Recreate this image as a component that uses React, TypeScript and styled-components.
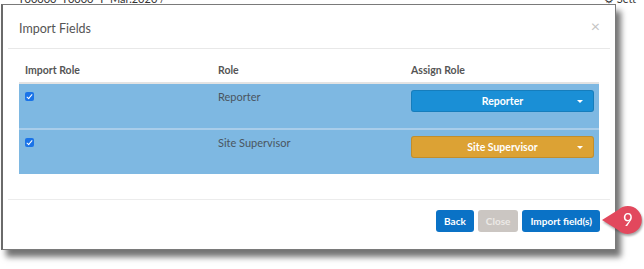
import React from "react";
import styled, { createGlobalStyle } from "styled-components";

const GlobalStyle = createGlobalStyle`
  body {
    margin: 0;
    background: #ffffff;
    font-family: Lato, "Open Sans", Arial, sans-serif;
  }
`;

const Page = styled.div`
  position: relative;
  width: 644px;
  height: 269px;
  overflow: hidden;
`;

const TopStrip = styled.div`
  height: 4px;
  overflow: hidden;
  display: flex;
  align-items: flex-end;
  justify-content: space-between;
  padding: 0 8px 0 18px;
  font-size: 11px;
  line-height: 11px;
  color: #333;
`;

const Modal = styled.div`
  margin-left: 1px;
  width: 615px;
  height: 246px;
  box-sizing: border-box;
  background: #fff;
  border: 1px solid #7a7a7a;
  border-left: 2px solid #6a6a6a;
  box-shadow: 5px 7px 6px rgba(0, 0, 0, 0.55);
  display: flex;
  flex-direction: column;
  padding: 0 5px;
`;

const Header = styled.div`
  height: 43px;
  display: flex;
  align-items: center;
  justify-content: space-between;
  padding: 0 10px 0 11px;
  border-bottom: 1px solid #e8e8e8;
`;

const Title = styled.h4`
  margin: 0;
  margin-top: 4px;
  font-size: 12.5px;
  font-weight: 400;
  color: #555;
`;

const CloseX = styled.span`
  font-size: 16px;
  color: #c4c4c4;
  margin-top: -2px;
`;

const Body = styled.div`
  padding: 13px 10px 0 11px;
  height: 137px;
  border-bottom: 1px solid #ececec;
`;

const Table = styled.div`
  width: 580px;
`;

const Row = styled.div<{ head?: boolean }>`
  display: grid;
  grid-template-columns: 193px 193px 194px;
  height: ${({ head }) => (head ? "20px" : "44px")};
  background: ${({ head }) => (head ? "transparent" : "#7eb8e2")};
  border-bottom: ${({ head }) => (head ? "2px solid #e3e3e3" : "2px solid #a9cdea")};
  &:last-child {
    border-bottom: none;
  }
`;

const HeadCell = styled.div`
  padding-left: 6px;
  font-size: 10.5px;
  font-weight: 700;
  color: #555;
  line-height: 14px;
  padding-top: 1px;
`;

const Cell = styled.div`
  padding: 6px 0 0 6px;
  font-size: 11px;
  color: #4a5560;
  line-height: 14px;
`;

const Check = styled.span`
  display: inline-block;
  width: 9px;
  height: 9px;
  margin-top: 2px;
  border-radius: 2px;
  background: #1a73e8;
  position: relative;
  &::after {
    content: "";
    position: absolute;
    left: 3px;
    top: 1px;
    width: 2px;
    height: 5px;
    border: solid #fff;
    border-width: 0 1.5px 1.5px 0;
    transform: rotate(40deg);
  }
`;

const SelectCell = styled.div`
  padding: 6px 5px 0 6px;
`;

const Select = styled.div<{ color: string }>`
  height: 22px;
  border-radius: 3px;
  background: ${({ color }) => color};
  border: 1px solid rgba(0, 0, 0, 0.12);
  box-sizing: border-box;
  display: flex;
  align-items: center;
  justify-content: center;
  position: relative;
  color: #fff;
  font-size: 10.5px;
  font-weight: 700;
  &::after {
    content: "";
    position: absolute;
    right: 10px;
    top: 9px;
    border-left: 3px solid transparent;
    border-right: 3px solid transparent;
    border-top: 3px solid #fff;
  }
`;

const Footer = styled.div`
  flex: 1;
  display: flex;
  justify-content: flex-end;
  align-items: flex-start;
  gap: 4px;
  padding: 10px 10px 0 0;
`;

const Button = styled.button<{ disabled?: boolean }>`
  height: 22px;
  padding: 0 8px;
  margin: 0;
  border: none;
  border-radius: 3px;
  font-family: Lato, "Open Sans", Arial, sans-serif;
  font-size: 10px;
  font-weight: 700;
  color: ${({ disabled }) => (disabled ? "#ece9e6" : "#fff")};
  background: ${({ disabled }) => (disabled ? "#cbc6c2" : "#0a72c6")};
`;

const Badge = styled.svg`
  position: absolute;
  left: 600px;
  top: 203px;
  filter: drop-shadow(1px 2px 1px rgba(0, 0, 0, 0.35));
`;

export default function App() {
  return (
    <Page>
      <GlobalStyle />
      <TopStrip>
        <span>T00000_T0000_T_Mar.2020 /</span>
        <span>⚙ Sett</span>
      </TopStrip>
      <Modal>
        <Header>
          <Title>Import Fields</Title>
          <CloseX>×</CloseX>
        </Header>
        <Body>
          <Table>
            <Row head>
              <HeadCell>Import Role</HeadCell>
              <HeadCell>Role</HeadCell>
              <HeadCell>Assign Role</HeadCell>
            </Row>
            <Row>
              <Cell>
                <Check />
              </Cell>
              <Cell>Reporter</Cell>
              <SelectCell>
                <Select color="#1a8fd6">Reporter</Select>
              </SelectCell>
            </Row>
            <Row>
              <Cell>
                <Check />
              </Cell>
              <Cell>Site Supervisor</Cell>
              <SelectCell>
                <Select color="#dca234">Site Supervisor</Select>
              </SelectCell>
            </Row>
          </Table>
        </Body>
        <Footer>
          <Button>Back</Button>
          <Button disabled>Close</Button>
          <Button>Import field(s)</Button>
        </Footer>
      </Modal>
      <Badge width="44" height="36" viewBox="0 0 44 36">
        <path d="M2 17 L18 7 A14 14 0 1 1 18 27 Z" fill="#e2485d" />
        <text
          x="28"
          y="23"
          textAnchor="middle"
          fill="#fff"
          fontSize="17"
          fontFamily="Lato, Arial, sans-serif"
        >
          9
        </text>
      </Badge>
    </Page>
  );
}
